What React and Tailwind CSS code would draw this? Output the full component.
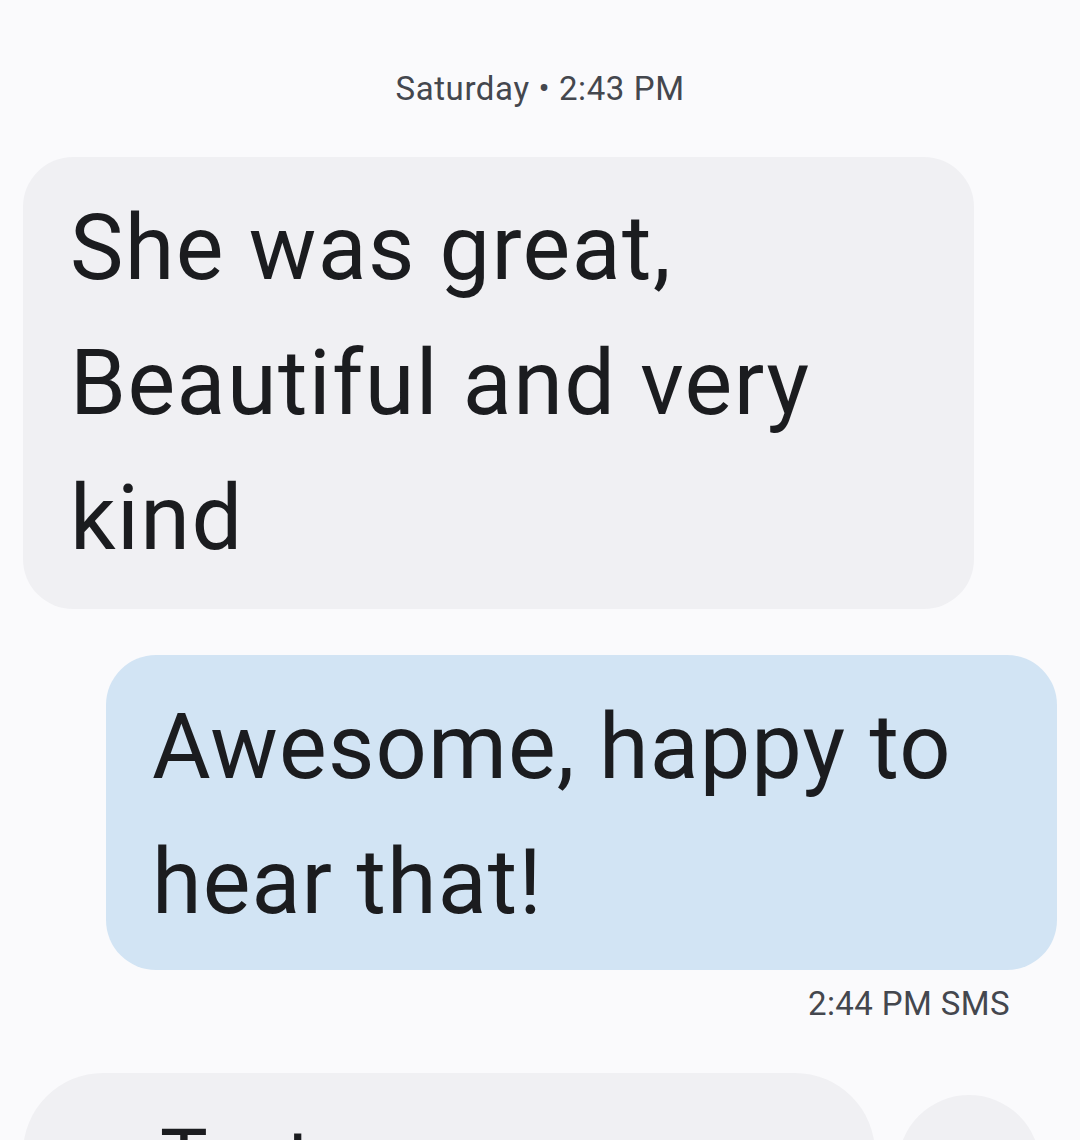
export default function App() {
  return (
    <div
      className="h-[1140px] w-[1080px] overflow-hidden bg-[#fafafc] text-[#1b1c1f]"
      style={{ fontFamily: "Roboto, 'Liberation Sans', sans-serif" }}
    >
      <div className="flex flex-col">
        <div className="pt-[67px] text-center text-[33px] leading-[44px] tracking-[0.6px] text-[#44474e]">
          Saturday • 2:43 PM
        </div>

        {/* incoming */}
        <div className="mt-[46px] ml-[23px] w-[951px] rounded-[50px] bg-[#f0f0f3] pt-[24px] pb-[23px] pl-[47px] pr-[40px]">
          <p className="text-[90px] leading-[135px] tracking-[1.4px]">
            She was great,
            <br />
            Beautiful and very
            <br />
            kind
          </p>
        </div>

        {/* outgoing */}
        <div className="mt-[46px] ml-[106px] w-[951px] rounded-[50px] bg-[#d2e4f4] pt-[25px] pb-[20px] pl-[46px] pr-[40px]">
          <p className="text-[90px] leading-[135px] tracking-[1.1px]">
            Awesome, happy to
            <br />
            hear that!
          </p>
        </div>

        <div className="mt-[14px] pr-[70px] text-right text-[33px] leading-[40px] tracking-[0.4px] text-[#44474e]">
          2:44 PM SMS
        </div>

        {/* compose */}
        <div className="mt-[49px] flex items-start">
          <div className="ml-[23px] h-[200px] w-[852px] rounded-[80px] bg-[#f0f0f3] pl-[137px] pt-[36px]">
            <span className="text-[80px] leading-[100px] text-[#1b1c1f]">Text</span>
          </div>
          <div className="ml-[23px] mt-[22px] h-[142px] w-[142px] rounded-full bg-[#f0f0f3]" />
        </div>
      </div>
    </div>
  )
}
